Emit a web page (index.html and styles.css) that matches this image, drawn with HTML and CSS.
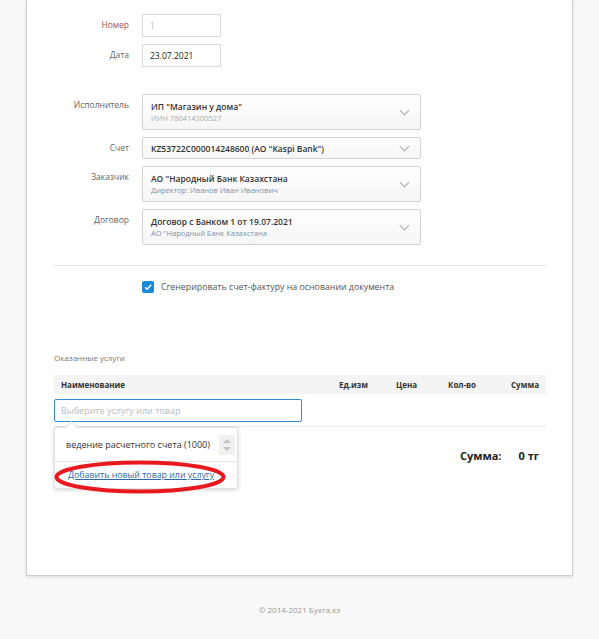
FILE: index.html
```html
<!DOCTYPE html>
<html lang="ru">
<head>
  <meta charset="UTF-8">
  <meta name="viewport" content="width=device-width, initial-scale=1.0">
  <title>Акт выполненных работ</title>
  <link rel="stylesheet" href="styles.css">
</head>
<body>
  <div class="card">
    <div class="form">
      <label class="label label-required">Номер</label>
      <input class="field field-short" type="text" value="1" disabled>

      <label class="label">Дата</label>
      <input class="field field-short" type="text" value="23.07.2021">

      <label class="label label-gap">Исполнитель</label>
      <div class="select select-gap">
        <div class="select-text">
          <div class="select-title">ИП "Магазин у дома"</div>
          <div class="select-sub">ИИН 780414300527</div>
        </div>
        <span class="chevron"></span>
      </div>

      <label class="label">Счет</label>
      <div class="select select-single">
        <div class="select-text">
          <div class="select-title">KZ53722C000014248600 (АО "Kaspi Bank")</div>
        </div>
        <span class="chevron"></span>
      </div>

      <label class="label">Заказчик</label>
      <div class="select">
        <div class="select-text">
          <div class="select-title">АО "Народный Банк Казахстана</div>
          <div class="select-sub select-sub-blue">Директор: Иванов Иван Иванович</div>
        </div>
        <span class="chevron"></span>
      </div>

      <label class="label">Договор</label>
      <div class="select">
        <div class="select-text">
          <div class="select-title">Договор с Банком 1 от 19.07.2021</div>
          <div class="select-sub select-sub-blue">АО "Народный Банк Казахстана</div>
        </div>
        <span class="chevron"></span>
      </div>
    </div>

    <hr class="divider">

    <div class="check-row">
      <span class="checkbox">
        <svg width="12" height="12" viewBox="0 0 12 12"><path d="M3 6.2 L5.1 8.2 L9.2 3.8" fill="none" stroke="#fff" stroke-width="1.4"/></svg>
      </span>
      <span>Сгенерировать счет-фактуру на основании документа</span>
    </div>

    <div class="section-title">Оказанные услуги</div>

    <div class="table">
      <div class="table-head">
        <div>Наименование</div>
        <div>Ед.изм</div>
        <div>Цена</div>
        <div>Кол-во</div>
        <div>Сумма</div>
      </div>
      <div class="table-row">
        <input class="search" type="text" placeholder="Выберите услугу или товар">
        <div class="dropdown">
          <div class="dropdown-item">
            <span>ведение расчетного счета (1000)</span>
            <span class="spin">
              <svg width="16" height="20" viewBox="0 0 16 20"><path d="M4 8 L8 4 L12 8 Z" fill="#c4c4c4"/><path d="M4 12 L12 12 L8 16 Z" fill="#c4c4c4"/></svg>
            </span>
          </div>
          <div class="dropdown-footer">
            <a href="#" class="add-link">Добавить новый товар или услугу</a>
          </div>
          <svg class="mark" width="174" height="34" viewBox="0 0 174 34"><ellipse cx="86" cy="17" rx="83.5" ry="14.5" fill="none" stroke="#e8181f" stroke-width="4"/></svg>
        </div>
      </div>
    </div>

    <div class="total">
      <span>Сумма:</span>
      <span>0 тг</span>
    </div>
  </div>

  <footer class="footer">© 2014-2021 Бухта.кз</footer>
</body>
</html>
```

FILE: styles.css
```css
body {
  margin: 0;
  background: #f8f8f8;
  font-family: "Open Sans", Arial, sans-serif;
  color: #333;
}
.card {
  margin: 0 26px;
  background: #fff;
  border: 1px solid #d0d0d0;
  border-top: none;
  box-shadow: 0 1px 3px rgba(0, 0, 0, 0.12);
  padding: 14px 26px 0 27px;
  height: 561px;
}
.form {
  display: grid;
  grid-template-columns: 75px 279px;
  column-gap: 13px;
  row-gap: 7px;
  align-items: start;
}
.label {
  font-size: 8.5px;
  color: #666;
  text-align: right;
  padding-top: 5px;
}
.label-required {
  color: #a9534f;
}
.label-gap,
.select-gap {
  margin-top: 20px;
}
.field {
  box-sizing: border-box;
  height: 23px;
  border: 1px solid #d9d9d9;
  padding: 0 7px;
  font: 8.5px "Open Sans", Arial, sans-serif;
  color: #222;
  background: #fff;
  margin: 0;
}
.field:disabled {
  color: #bbb;
  background: #fff;
}
.field-short {
  width: 79px;
}
.select {
  box-sizing: border-box;
  height: 36px;
  border: 1px solid #d2d2d2;
  border-radius: 2px;
  background: linear-gradient(#fff, #f5f5f5);
  display: flex;
  align-items: center;
  padding: 0 12px 0 8px;
}
.select-single {
  height: 22px;
}
.select-text {
  flex: 1;
}
.select-title {
  font-size: 8.5px;
  font-weight: 600;
  color: #333;
  line-height: 13px;
}
.select-sub {
  font-size: 7.5px;
  color: #aaa;
  line-height: 11px;
}
.select-sub-blue {
  color: #7a93ad;
}
.chevron {
  width: 6px;
  height: 6px;
  border-right: 1px solid #aaa;
  border-bottom: 1px solid #aaa;
  transform: rotate(45deg);
  margin-top: -4px;
}
.divider {
  border: none;
  border-top: 1px solid #e5e5e5;
  margin: 20px 0 0;
}
.check-row {
  display: flex;
  align-items: center;
  gap: 7px;
  margin: 15px 0 0 88px;
  font-size: 8.8px;
  color: #555;
}
.checkbox {
  width: 12px;
  height: 12px;
  border-radius: 2px;
  background: #1b8ad6;
  display: flex;
}
.section-title {
  margin-top: 59px;
  font-size: 8px;
  color: #777;
}
.table {
  margin-top: 12px;
}
.table-head {
  display: grid;
  grid-template-columns: 278px 57px 52px 63px 1fr;
  height: 19px;
  align-items: center;
  background: #f4f4f4;
  padding: 0 7px;
  font-size: 8px;
  font-weight: 700;
  color: #333;
}
.table-row {
  position: relative;
  padding: 5px 0 4px;
  border-bottom: 1px solid #e8e8e8;
}
.search {
  box-sizing: border-box;
  width: 248px;
  height: 23px;
  border: 1px solid #2f8ed8;
  border-radius: 2px;
  padding: 0 6px;
  font: 9px "Open Sans", Arial, sans-serif;
  margin: 0;
  outline: none;
  display: block;
}
.search::placeholder {
  color: #bbb;
}
.dropdown {
  position: absolute;
  top: 33px;
  left: 0;
  width: 182px;
  background: #fff;
  border: 1px solid #e2e2e2;
  border-radius: 2px;
  box-shadow: 0 1px 4px rgba(0, 0, 0, 0.18);
  z-index: 2;
}
.dropdown::before {
  content: "";
  position: absolute;
  top: -5px;
  left: 12px;
  width: 8px;
  height: 8px;
  background: #fff;
  border-left: 1px solid #e2e2e2;
  border-top: 1px solid #e2e2e2;
  transform: rotate(45deg);
}
.dropdown-item {
  display: flex;
  align-items: center;
  justify-content: space-between;
  height: 33px;
  padding: 0 2px 0 11px;
  border-bottom: 1px solid #e6e6e6;
  font-size: 9px;
  color: #333;
}
.spin {
  display: flex;
  background: #f0f0f0;
}
.dropdown-footer {
  height: 26px;
  display: flex;
  align-items: center;
  padding-left: 13px;
}
.add-link {
  font-size: 8.8px;
  color: #2a6aa8;
}
.mark {
  position: absolute;
  left: -1px;
  top: 32px;
}
.total {
  display: flex;
  justify-content: flex-end;
  gap: 17px;
  margin-top: 21px;
  padding-right: 7px;
  font-size: 11px;
  font-weight: 700;
  color: #222;
}
.footer {
  text-align: center;
  font-size: 8px;
  color: #999;
  margin-top: 28px;
}
```
